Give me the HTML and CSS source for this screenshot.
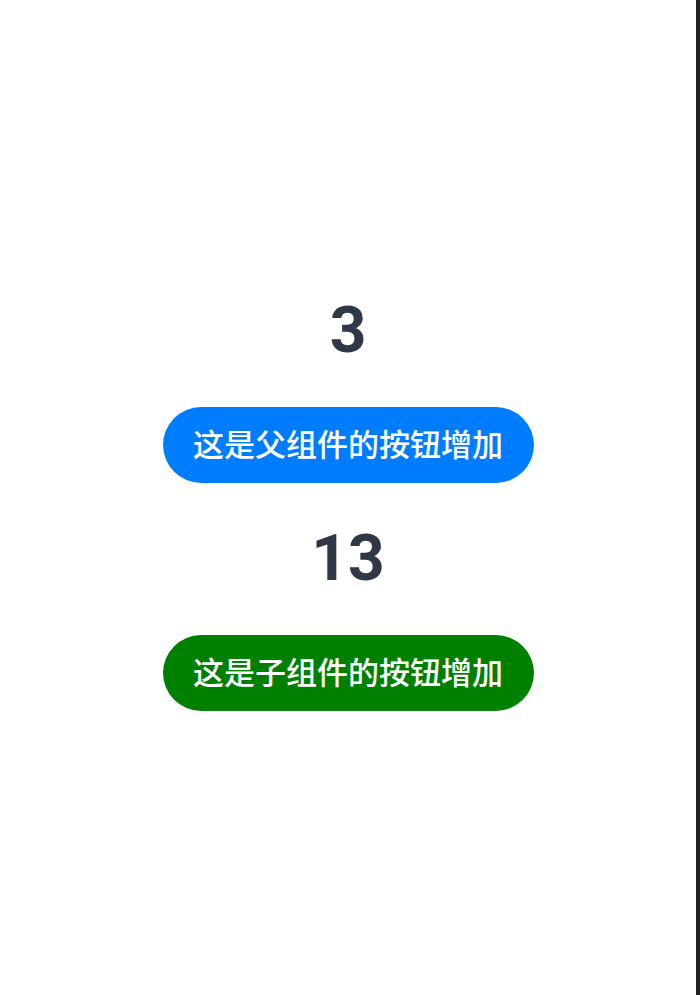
FILE: index.html
```html
<!DOCTYPE html>
<html lang="zh-CN">
<head>
    <meta charset="UTF-8" />
    <meta name="viewport" content="width=device-width, initial-scale=1.0" />
    <title>父子组件计数</title>
    <link rel="stylesheet" href="styles.css">
</head>
<body>
    <main class="page">
        <div class="counter">
            <span class="count">3</span>
            <button type="button" class="btn btn-blue">这是父组件的按钮增加</button>
            <span class="count">13</span>
            <button type="button" class="btn btn-green">这是子组件的按钮增加</button>
        </div>
    </main>
</body>
</html>
```

FILE: styles.css
```css
/* 重置 */
*, ::before, ::after { box-sizing: border-box; }
html, body { margin: 0; padding: 0; background: #ffffff; }
body { font-family: Roboto, "Noto Sans CJK SC", sans-serif; }

/* 页面和右侧边框 */
.page {
    width: 700px;
    height: 995px;
    border-right: 4px solid #222222;
    background: #ffffff;
}

.counter {
    display: flex;
    flex-direction: column;
    align-items: center;
    gap: 36px;
    padding-top: 291px;
}

/* 计数数字 */
.count {
    display: block;
    font-size: 64px;
    line-height: 80px;
    font-weight: 700;
    color: #2f3847;
}

/* 胶囊按钮 */
.btn {
    width: 371px;
    height: 76px;
    border: 0;
    border-radius: 38px;
    padding: 0 0 5px;
    color: #ffffff;
    font-family: "Noto Sans CJK SC", sans-serif;
    font-size: 31px;
    font-weight: 500;
    line-height: 1;
    cursor: pointer;
}
.btn-blue { background-color: #007dff; }
.btn-green { background-color: #008000; }
```
